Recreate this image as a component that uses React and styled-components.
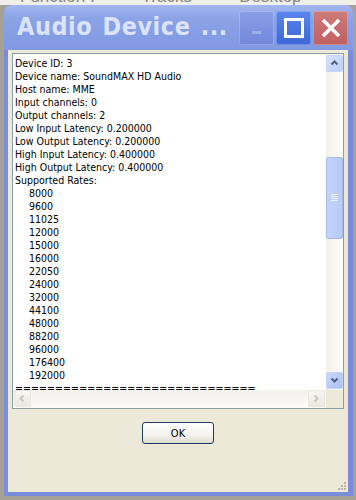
import React from "react";
import styled, {createGlobalStyle} from "styled-components";

const GlobalStyle = createGlobalStyle`
  body {
    margin: 0;
    background: #a5a197;
  }
`;

const lines = [
  "Device ID: 3",
  "Device name: SoundMAX HD Audio",
  "Host name: MME",
  "Input channels: 0",
  "Output channels: 2",
  "Low Input Latency: 0.200000",
  "Low Output Latency: 0.200000",
  "High Input Latency: 0.400000",
  "High Output Latency: 0.400000",
  "Supported Rates:",
];

const rates = [
  "8000", "9600", "11025", "12000", "15000", "16000", "22050", "24000",
  "32000", "44100", "48000", "88200", "96000", "176400", "192000",
];

const Desktop = styled.div`
  width: 356px;
  height: 500px;
  overflow: hidden;
  background: #a5a197;
`;

const BackApp = styled.div`
  height: 5px;
  overflow: hidden;
  background: #f1efe9;
  font-family: "Liberation Sans", Arial, sans-serif;
  font-size: 17px;
  line-height: 17px;
  color: #8a887f;
  white-space: pre;
  span {
    display: block;
    margin-top: -12px;
    padding-left: 20px;
  }
`;

const Window = styled.div`
  margin-left: 4px;
  width: 349px;
  height: 491px;
  background: #7a8ddb;
  border-radius: 8px 8px 0 0;
  display: flex;
  flex-direction: column;
`;

const TitleBar = styled.div`
  height: 45px;
  flex: none;
  display: flex;
  align-items: center;
  padding-left: 13px;
  padding-right: 5px;
  border-radius: 8px 8px 0 0;
  background: linear-gradient(180deg, #a3b7ef 0%, #8ba2e6 30%, #8199e2 100%);
`;

const Title = styled.div`
  flex: 1;
  font-family: "DejaVu Sans Condensed", "DejaVu Sans", sans-serif;
  font-weight: bold;
  font-size: 25px;
  letter-spacing: 0.5px;
  word-spacing: 2px;
  color: #dae3fa;
  white-space: nowrap;
  padding-bottom: 2px;
`;

const Buttons = styled.div`
  display: flex;
  gap: 2px;
`;

const CapButton = styled.div`
  width: 35px;
  height: 34px;
  border-radius: 3px;
  display: flex;
  align-items: center;
  justify-content: center;
  background: ${(p) =>
    p.kind === "close"
      ? "linear-gradient(180deg, #cf7b7b, #bf6060)"
      : p.kind === "max"
      ? "linear-gradient(180deg, #5a85ea, #3c68d8)"
      : "linear-gradient(180deg, #8a9fe8, #7088de)"};
  box-shadow: inset 0 0 0 1px rgba(255, 255, 255, 0.25);
`;

const Client = styled.div`
  flex: 1;
  margin: 0 5px 4px 4px;
  background: #ece9d8;
  display: flex;
  flex-direction: column;
  align-items: center;
  position: relative;
`;

const TextBox = styled.div`
  margin: 3px 0 0 4px;
  align-self: flex-start;
  width: 330px;
  height: 354px;
  border: 1px solid #8d9fa3;
  background: #fff;
  display: grid;
  grid-template-columns: 1fr 17px;
  grid-template-rows: 1fr 18px;
`;

const Content = styled.div`
  overflow: hidden;
  padding: 3px 0 0 2px;
  font-family: "DejaVu Sans Condensed", "DejaVu Sans", sans-serif;
  font-size: 10.5px;
  line-height: 13px;
  color: #000;
  white-space: pre;
`;

const Line = styled.div`
  padding-left: ${(p) => (p.indent ? "14px" : "0")};
  letter-spacing: ${(p) => (p.rule ? "0.1px" : "normal")};
`;

const VTrack = styled.div`
  background: linear-gradient(90deg, #f3f1ec, #fcfbf8);
  display: flex;
  flex-direction: column;
  padding: 1px 0;
`;

const HTrack = styled.div`
  background: linear-gradient(180deg, #f3f1ec, #fcfbf8);
  display: flex;
  justify-content: space-between;
  padding: 0 1px;
`;

const ArrowButton = styled.div`
  width: 17px;
  height: 17px;
  flex: none;
  border-radius: 2px;
  border: 1px solid ${(p) => (p.disabled ? "#e9e7df" : "#c7d4f6")};
  box-sizing: border-box;
  display: flex;
  align-items: center;
  justify-content: center;
  background: ${(p) =>
    p.disabled
      ? "linear-gradient(180deg, #f7f6f2, #ebe9e1)"
      : p.active
      ? "linear-gradient(135deg, #c9d7fb, #a9c0f4)"
      : "linear-gradient(135deg, #d7e2fd, #bccef8)"};
`;

const Thumb = styled.div`
  margin-top: 85px;
  height: 82px;
  border-radius: 2px;
  border: 1px solid #a7b9e0;
  box-sizing: border-box;
  background: linear-gradient(90deg, #c4d3fb, #b7caf8);
  display: flex;
  align-items: center;
  justify-content: center;
`;

const Spacer = styled.div`
  flex: 1;
`;

const Corner = styled.div`
  background: #ece9d8;
`;

const OkButton = styled.button`
  margin-top: 13px;
  width: 72px;
  height: 22px;
  border: 1px solid #1e3a5c;
  border-radius: 3px;
  background: linear-gradient(180deg, #ffffff 0%, #f3f2ec 60%, #dedbd0 100%);
  font-family: "DejaVu Sans Condensed", "DejaVu Sans", sans-serif;
  font-size: 11px;
  color: #000;
  padding: 0;
`;

const Grip = styled.svg`
  position: absolute;
  right: 1px;
  bottom: 1px;
`;

const Chevron = ({dir, color}) => {
  const d = {
    up: "M1.5 5.5 L4.5 2.5 L7.5 5.5",
    down: "M1.5 2.5 L4.5 5.5 L7.5 2.5",
    left: "M5.5 1.5 L2.5 4.5 L5.5 7.5",
    right: "M2.5 1.5 L5.5 4.5 L2.5 7.5",
  }[dir];
  return (
    <svg width="9" height="9" viewBox="0 0 9 9">
      <path d={d} fill="none" stroke={color} strokeWidth="2" />
    </svg>
  );
};

export default function App() {
  return (
    <Desktop>
      <GlobalStyle />
      <BackApp>
        <span>{"Function I          Tracks          Desktop"}</span>
      </BackApp>
      <Window>
        <TitleBar>
          <Title>Audio Device ...</Title>
          <Buttons>
            <CapButton kind="min">
              <svg width="14" height="14" viewBox="0 0 14 14">
                <rect x="2" y="10" width="9" height="3" fill="#9fb0ea" />
              </svg>
            </CapButton>
            <CapButton kind="max">
              <svg width="20" height="20" viewBox="0 0 20 20">
                <rect x="1.5" y="1.5" width="17" height="17" fill="none" stroke="#fff" strokeWidth="3" />
              </svg>
            </CapButton>
            <CapButton kind="close">
              <svg width="20" height="20" viewBox="0 0 20 20">
                <path d="M2 2 L18 18 M18 2 L2 18" stroke="#fff" strokeWidth="3.5" />
              </svg>
            </CapButton>
          </Buttons>
        </TitleBar>
        <Client>
          <TextBox>
            <Content>
              {lines.map((l) => (
                <Line key={l}>{l}</Line>
              ))}
              {rates.map((r) => (
                <Line key={r} indent>
                  {r}
                </Line>
              ))}
              <Line rule>{"=".repeat(30)}</Line>
            </Content>
            <VTrack>
              <ArrowButton>
                <Chevron dir="up" color="#4d6185" />
              </ArrowButton>
              <Thumb>
                <svg width="7" height="8" viewBox="0 0 7 8">
                  {[0, 2, 4, 6].map((y) => (
                    <rect key={y} x="0" y={y} width="7" height="1" fill="#eef3fe" />
                  ))}
                </svg>
              </Thumb>
              <Spacer />
              <ArrowButton active>
                <Chevron dir="down" color="#4d6185" />
              </ArrowButton>
            </VTrack>
            <HTrack>
              <ArrowButton disabled>
                <Chevron dir="left" color="#c9c7bd" />
              </ArrowButton>
              <ArrowButton disabled>
                <Chevron dir="right" color="#c9c7bd" />
              </ArrowButton>
            </HTrack>
            <Corner />
          </TextBox>
          <OkButton>OK</OkButton>
          <Grip width="10" height="10" viewBox="0 0 10 10">
            {[
              [7, 1], [4, 4], [7, 4], [1, 7], [4, 7], [7, 7],
            ].map(([x, y]) => (
              <rect key={`${x}-${y}`} x={x} y={y} width="2" height="2" fill="#b9b6a8" />
            ))}
          </Grip>
        </Client>
      </Window>
    </Desktop>
  );
}
